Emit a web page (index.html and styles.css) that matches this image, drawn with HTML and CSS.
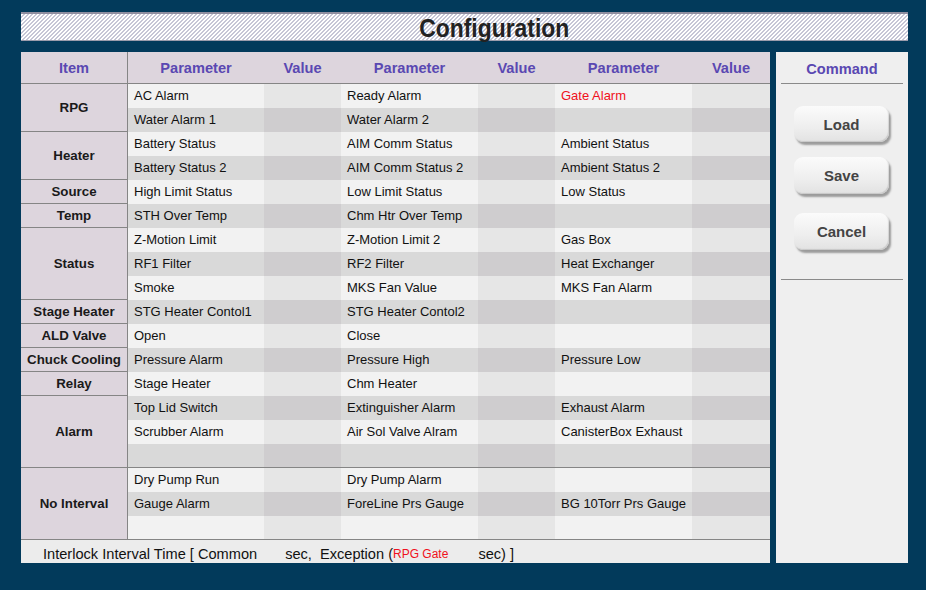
FILE: index.html
```html
<!DOCTYPE html>
<html>
<head>
<meta charset="utf-8">
<link rel="stylesheet" href="styles.css">
</head>
<body>
<div class="titlebar"><span class="title">Configuration</span></div>
<div class="main">
  <div class="table">
    <div class="head">
      <div class="hitem">Item</div>
      <div class="hc">Parameter</div><div class="hc">Value</div>
      <div class="hc">Parameter</div><div class="hc">Value</div>
      <div class="hc">Parameter</div><div class="hc">Value</div>
    </div>

    <div class="group">
      <div class="item">RPG</div>
      <div class="rows">
        <div class="row l"><div class="p">AC Alarm</div><div class="v"></div><div class="p">Ready Alarm</div><div class="v"></div><div class="p red">Gate Alarm</div><div class="v"></div></div>
        <div class="row d"><div class="p">Water Alarm 1</div><div class="v"></div><div class="p">Water Alarm 2</div><div class="v"></div><div class="p"></div><div class="v"></div></div>
      </div>
    </div>

    <div class="group">
      <div class="item">Heater</div>
      <div class="rows">
        <div class="row l"><div class="p">Battery Status</div><div class="v"></div><div class="p">AIM Comm Status</div><div class="v"></div><div class="p">Ambient Status</div><div class="v"></div></div>
        <div class="row d"><div class="p">Battery Status 2</div><div class="v"></div><div class="p">AIM Comm Status 2</div><div class="v"></div><div class="p">Ambient Status 2</div><div class="v"></div></div>
      </div>
    </div>

    <div class="group">
      <div class="item">Source</div>
      <div class="rows">
        <div class="row l"><div class="p">High Limit Status</div><div class="v"></div><div class="p">Low Limit Status</div><div class="v"></div><div class="p">Low Status</div><div class="v"></div></div>
      </div>
    </div>

    <div class="group">
      <div class="item">Temp</div>
      <div class="rows">
        <div class="row d"><div class="p">STH Over Temp</div><div class="v"></div><div class="p">Chm Htr Over Temp</div><div class="v"></div><div class="p"></div><div class="v"></div></div>
      </div>
    </div>

    <div class="group">
      <div class="item">Status</div>
      <div class="rows">
        <div class="row l"><div class="p">Z-Motion Limit</div><div class="v"></div><div class="p">Z-Motion Limit 2</div><div class="v"></div><div class="p">Gas Box</div><div class="v"></div></div>
        <div class="row d"><div class="p">RF1 Filter</div><div class="v"></div><div class="p">RF2 Filter</div><div class="v"></div><div class="p">Heat Exchanger</div><div class="v"></div></div>
        <div class="row l"><div class="p">Smoke</div><div class="v"></div><div class="p">MKS Fan Value</div><div class="v"></div><div class="p">MKS Fan Alarm</div><div class="v"></div></div>
      </div>
    </div>

    <div class="group">
      <div class="item">Stage Heater</div>
      <div class="rows">
        <div class="row d"><div class="p">STG Heater Contol1</div><div class="v"></div><div class="p">STG Heater Contol2</div><div class="v"></div><div class="p"></div><div class="v"></div></div>
      </div>
    </div>

    <div class="group">
      <div class="item">ALD Valve</div>
      <div class="rows">
        <div class="row l"><div class="p">Open</div><div class="v"></div><div class="p">Close</div><div class="v"></div><div class="p"></div><div class="v"></div></div>
      </div>
    </div>

    <div class="group">
      <div class="item">Chuck Cooling</div>
      <div class="rows">
        <div class="row d"><div class="p">Pressure Alarm</div><div class="v"></div><div class="p">Pressure High</div><div class="v"></div><div class="p">Pressure Low</div><div class="v"></div></div>
      </div>
    </div>

    <div class="group">
      <div class="item">Relay</div>
      <div class="rows">
        <div class="row l"><div class="p">Stage Heater</div><div class="v"></div><div class="p">Chm Heater</div><div class="v"></div><div class="p"></div><div class="v"></div></div>
      </div>
    </div>

    <div class="group">
      <div class="item">Alarm</div>
      <div class="rows">
        <div class="row d"><div class="p">Top Lid Switch</div><div class="v"></div><div class="p">Extinguisher Alarm</div><div class="v"></div><div class="p">Exhaust Alarm</div><div class="v"></div></div>
        <div class="row l"><div class="p">Scrubber Alarm</div><div class="v"></div><div class="p">Air Sol Valve Alram</div><div class="v"></div><div class="p">CanisterBox Exhaust</div><div class="v"></div></div>
        <div class="row d"><div class="p"></div><div class="v"></div><div class="p"></div><div class="v"></div><div class="p"></div><div class="v"></div></div>
      </div>
    </div>

    <div class="group">
      <div class="item">No Interval</div>
      <div class="rows">
        <div class="row l"><div class="p">Dry Pump Run</div><div class="v"></div><div class="p">Dry Pump Alarm</div><div class="v"></div><div class="p"></div><div class="v"></div></div>
        <div class="row d"><div class="p">Gauge Alarm</div><div class="v"></div><div class="p">ForeLine Prs Gauge</div><div class="v"></div><div class="p">BG 10Torr Prs Gauge</div><div class="v"></div></div>
        <div class="row l"><div class="p"></div><div class="v"></div><div class="p"></div><div class="v"></div><div class="p"></div><div class="v"></div></div>
      </div>
    </div>

    <div class="footer"><span>Interlock Interval Time [ Common</span><span class="gap1"></span><span>sec,  Exception (</span><span class="red small">RPG Gate</span><span class="gap2"></span><span>sec) ]</span></div>
  </div>

  <div class="cmd">
    <div class="cmdhead">Command</div>
    <div class="btns">
      <div class="btn b1">Load</div>
      <div class="btn b2">Save</div>
      <div class="btn b3">Cancel</div>
    </div>
  </div>
</div>
</body>
</html>
```
FILE: styles.css
```css
html, body {
  margin: 0;
  padding: 0;
}
body {
  background: #023a5b;
  width: 926px;
  height: 590px;
  overflow: hidden;
  padding: 12px 0 0 21px;
  box-sizing: border-box;
  font-family: "Liberation Sans", Arial, sans-serif;
}
.titlebar {
  width: 887px;
  height: 29px;
  box-sizing: border-box;
  border-top: 2px solid #8e8ea0;
  border-bottom: 1px solid #9c9cac;
  background: repeating-linear-gradient(135deg, #ffffff 0px, #ffffff 1.5px, #c6c6d6 1.5px, #c6c6d6 2.83px);
  display: flex;
  justify-content: center;
  align-items: center;
  padding-left: 59px;
}
.title {
  display: inline-block;
  font-size: 26px;
  font-weight: bold;
  color: #222;
  transform: scaleX(0.88);
  line-height: 26px;
  margin-top: 1px;
}
.main {
  display: flex;
  gap: 6px;
  margin-top: 11px;
  height: 511px;
}
.table {
  width: 749px;
  background: #ececec;
  display: flex;
  flex-direction: column;
}
.head {
  display: grid;
  grid-template-columns: 107px 136px 77px 137px 77px 137px 78px;
  height: 32px;
  box-sizing: border-box;
  border-bottom: 1px solid #858585;
  background: #ddd5dd;
}
.hitem, .hc {
  display: flex;
  align-items: center;
  justify-content: center;
  font-size: 14.6px;
  font-weight: bold;
  color: #5a48b2;
  padding-top: 1px;
}
.hitem {
  border-right: 1px solid #858585;
}
.group {
  display: flex;
  border-bottom: 1px solid #858585;
}
.item {
  width: 107px;
  box-sizing: border-box;
  border-right: 1px solid #858585;
  background: #ddd5dd;
  display: flex;
  align-items: center;
  justify-content: center;
  font-size: 13.3px;
  font-weight: bold;
  color: #1a1a1a;
}
.rows {
  display: flex;
  flex-direction: column;
  width: 642px;
}
.row {
  display: grid;
  grid-template-columns: 136px 77px 137px 77px 137px 78px;
  height: 24px;
}
.rows .row:last-child {
  height: 23px;
}
.p, .v {
  font-size: 13px;
  line-height: 24px;
  color: #111;
  padding-left: 6px;
  white-space: nowrap;
}
.row.l .p { background: #f2f2f2; }
.row.l .v { background: #e6e6e6; }
.row.d .p { background: #d9d9d9; }
.row.d .v { background: #cfcdcf; }
.red { color: #f01020; }
.footer {
  flex: 1;
  background: #ececec;
  display: flex;
  align-items: flex-start;
  padding-left: 22px;
  padding-top: 6px;
  box-sizing: border-box;
  font-size: 14.6px;
  line-height: 17px;
  color: #111;
  white-space: pre;
}
.small {
  font-size: 12px;
}
.gap1 { display: inline-block; width: 28px; }
.gap2 { display: inline-block; width: 30px; }
.cmd {
  width: 132px;
  background: #efefef;
  display: flex;
  flex-direction: column;
  align-items: center;
}
.cmdhead {
  width: 122px;
  height: 32px;
  box-sizing: border-box;
  border-bottom: 1px solid #8a8a8a;
  display: flex;
  align-items: center;
  justify-content: center;
  font-size: 14.6px;
  font-weight: bold;
  color: #5a48b2;
  padding-top: 2px;
}
.btns {
  width: 122px;
  display: flex;
  flex-direction: column;
  align-items: center;
  border-bottom: 1px solid #8a8a8a;
  padding-top: 22px;
  padding-bottom: 29px;
  gap: 15px;
}
.btn {
  width: 95px;
  height: 36px;
  box-sizing: border-box;
  border-radius: 9px;
  background: linear-gradient(#fbfbfb, #eeeeee 60%, #e2e2e2);
  box-shadow: 2px 3px 2px rgba(0,0,0,0.35), inset -1px -1px 1px rgba(0,0,0,0.12);
  display: flex;
  align-items: center;
  justify-content: center;
  font-size: 15px;
  font-weight: bold;
  color: #444;
  margin-left: -1px;
}
.b2 { height: 37px; }
.b3 { margin-top: 4px; height: 37px; }
```
